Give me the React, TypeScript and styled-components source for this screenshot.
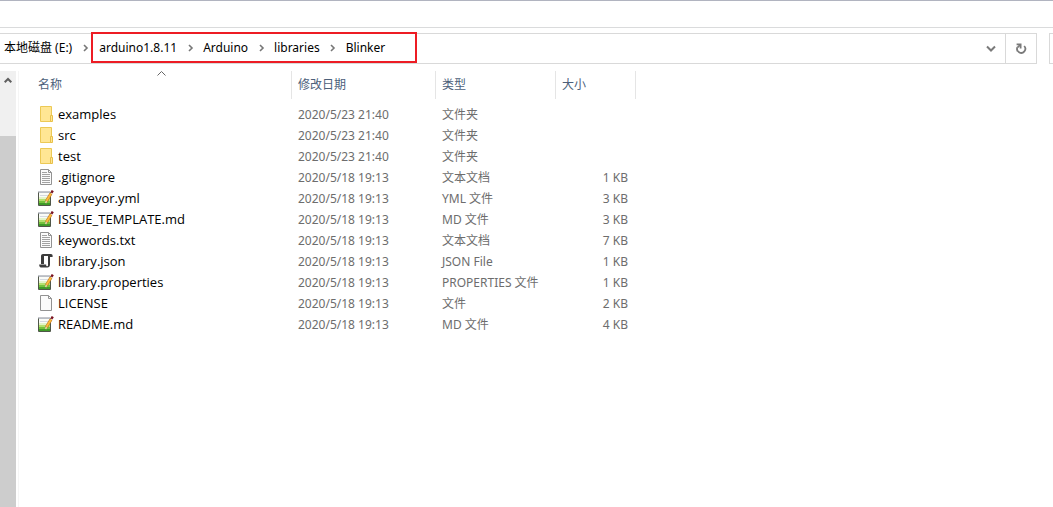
import React from "react";
import styled, { createGlobalStyle } from "styled-components";

const GlobalStyle = createGlobalStyle`
  * { box-sizing: border-box; }
  body {
    margin: 0;
    background: #fff;
    font-family: "Noto Sans", "Noto Sans CJK SC", sans-serif;
    font-size: 12px;
    line-height: 20px;
    color: #000;
  }
  button, input, a { font: inherit; color: inherit; }
`;

const Window = styled.div`
  display: flex;
  flex-direction: column;
  min-height: 100vh;
  overflow: hidden;
`;

const Ribbon = styled.div`
  height: 28px;
  border-top: 1px solid #b1b4c0;
  border-bottom: 1px solid #dadbdc;
`;

const NavRow = styled.div`
  display: flex;
  gap: 12px;
  padding-top: 5px;
`;

const AddressBar = styled.nav`
  display: flex;
  flex: 1;
  height: 31px;
  border: 1px solid #d9d9d9;
  border-left: 0;
`;

const Crumbs = styled.div`
  display: flex;
  align-items: center;
  flex: 1;
  padding: 0 0 2px 4px;
`;

const Crumb = styled.a`
  text-decoration: none;
  white-space: nowrap;
`;

const IconButton = styled.button<{ $width: number; $divided?: boolean }>`
  display: flex;
  align-items: center;
  justify-content: center;
  width: ${(p) => p.$width}px;
  padding: 0;
  border: 0;
  border-left: ${(p) => (p.$divided ? "1px solid #d9d9d9" : "0")};
  background: none;
`;

const Highlighted = styled.div`
  position: relative;
  display: flex;
  align-items: center;

  &::after {
    content: "";
    position: absolute;
    inset: -6px -32px -5px -8px;
    border: 2px solid #ed1c24;
    pointer-events: none;
  }
`;

const SearchBox = styled.input`
  width: 4px;
  height: 31px;
  padding: 0;
  border: 1px solid #d9d9d9;
  border-right: 0;
`;

const Content = styled.div`
  display: flex;
  flex: 1;
  margin-top: 7px;
`;

const Scrollbar = styled.div`
  display: flex;
  flex-direction: column;
  width: 16px;
  background: #f0f0f0;
`;

const ScrollUp = styled.button`
  display: flex;
  justify-content: center;
  height: 65px;
  padding: 6px 0 0;
  border: 0;
  background: none;
`;

const ScrollThumb = styled.div`
  flex: 1;
  background: #cdcdcd;
`;

const FilePane = styled.main`
  flex: 1;
  margin-left: 2px;
  padding-left: 13px;
  border-left: 1px solid #f5f5f5;
`;

const FileTable = styled.table`
  width: 604px;
  table-layout: fixed;
  border-collapse: collapse;
`;

const HeadCell = styled.th<{ $width: number }>`
  width: ${(p) => p.$width}px;
  padding: 0 0 5px;
  font-weight: 400;
`;

const HeadButton = styled.button`
  position: relative;
  display: block;
  width: 100%;
  height: 28px;
  padding: 0 6px;
  border: 0;
  border-right: 1px solid #e5e5e5;
  background: none;
  color: #4c607a;
  text-align: left;
`;

const SortMark = styled.svg`
  position: absolute;
  top: 0;
  left: 50%;
  margin-left: -5px;
`;

const Cell = styled.td<{ $right?: boolean }>`
  height: 21px;
  padding: 0 8px 0 6px;
  color: #6d6d6d;
  text-align: ${(p) => (p.$right ? "right" : "left")};
  white-space: nowrap;
`;

const NameCell = styled(Cell)`
  vertical-align: top;
`;

const FileName = styled.div`
  display: flex;
  align-items: center;
  gap: 4px;
  color: #000;
  font-family: "Open Sans", "Noto Sans CJK SC", sans-serif;
  font-size: 13px;
`;

const Chevron = () => (
  <svg width="7" height="8" viewBox="0 0 7 8" fill="none" stroke="#777" strokeWidth="1.6">
    <path d="M2 1l3 3-3 3" />
  </svg>
);

const DownIcon = () => (
  <svg width="10" height="8" viewBox="0 0 10 8" fill="none" stroke="#7a7a7a" strokeWidth="2">
    <path d="M1 1.5l4 4 4-4" />
  </svg>
);

const RefreshIcon = () => (
  <svg width="12" height="12" viewBox="0 0 12 12" fill="none" stroke="#7a7a7a" strokeWidth="1.8">
    <path d="M9.2 3A4.1 4.1 0 1 1 2.4 4.2" />
    <path d="M1.6 1.4h4v4" />
    <path d="M5.4 1.6L2.6 4.3" />
  </svg>
);

const UpIcon = () => (
  <svg width="8" height="7" viewBox="0 0 8 7" fill="none" stroke="#5f5f5f" strokeWidth="2">
    <path d="M.7 5.3L4 2l3.3 3.3" />
  </svg>
);

type Kind = "folder" | "text" | "note" | "script" | "blank";

const Page = () => (
  <path d="M2.5.5h8l3 3v12h-11z" fill="#fbfbfb" stroke="#929292" />
);

const FileIcon = ({ kind }: { kind: Kind }) => (
  <svg width="16" height="16" viewBox="0 0 16 16" aria-hidden="true">
    {kind === "folder" && (
      <>
        <path d="M2.5.5h11v15h-11z" fill="#ffe694" stroke="#ecc955" />
        <path d="M12.5 9.5h2v6h-2z" fill="#ffe694" stroke="#e8c04a" />
      </>
    )}
    {kind === "text" && (
      <>
        <Page />
        <path d="M10.5.5v3h3" fill="none" stroke="#929292" />
        <path d="M4 3.5h5M4 5.5h8M4 7.5h8M4 9.5h8M4 11.5h8M4 13.5h8" stroke="#a2a2a2" />
      </>
    )}
    {kind === "blank" && (
      <>
        <Page />
        <path d="M10.5.5v3h3" fill="none" stroke="#929292" />
      </>
    )}
    {kind === "script" && (
      <>
        <path d="M5 1h8c1 0 1.6.8 1.6 1.8V4H12V3H6v8H3V3.2C3 1.8 3.8 1 5 1z" fill="#3c3c3c" />
        <path d="M10 3h2v8.6c0 1.8-1 3-2.6 3H3.8C2.2 14.6 1.2 13.6 1.2 12v-.4h7v.8c0 .5.3.8.8.8s1-.3 1-1z" fill="#3c3c3c" />
      </>
    )}
    {kind === "note" && (
      <>
        <path d="M.5 2.5h12v13H.5z" fill="#fafbf7" />
        <path d="M1 7h11v2H1z" fill="#e3f4c8" />
        <path d="M1 9h11v2H1z" fill="#b4e070" />
        <path d="M1 11h11v2H1z" fill="#74c23c" />
        <path d="M1 13h11v2H1z" fill="#3f9a28" />
        <path d="M2 5.5h8" stroke="#d5dade" />
        <path d="M.5 2v13.5h12V2" fill="none" stroke="#4f5648" />
        <path d="M.5 1.5h12" stroke="#8a8f98" strokeDasharray="1 1" />
        <path d="M.5 2.5h12" stroke="#b9bdc4" />
        <path d="M13 3.4L8.4 11.2" stroke="#b36a1c" strokeWidth="3" />
        <path d="M13 3.4L8.6 10.8" stroke="#fdbb3c" strokeWidth="2" />
        <path d="M8.7 10.8L7.5 13" stroke="#e7c9a0" strokeWidth="1.6" />
        <path d="M13.4 2.8L14.8.6" stroke="#7b1320" strokeWidth="2.4" />
      </>
    )}
  </svg>
);

const files: { name: string; kind: Kind; date: string; type: string; size: string }[] = [
  { name: "examples", kind: "folder", date: "2020/5/23 21:40", type: "文件夹", size: "" },
  { name: "src", kind: "folder", date: "2020/5/23 21:40", type: "文件夹", size: "" },
  { name: "test", kind: "folder", date: "2020/5/23 21:40", type: "文件夹", size: "" },
  { name: ".gitignore", kind: "text", date: "2020/5/18 19:13", type: "文本文档", size: "1 KB" },
  { name: "appveyor.yml", kind: "note", date: "2020/5/18 19:13", type: "YML 文件", size: "3 KB" },
  { name: "ISSUE_TEMPLATE.md", kind: "note", date: "2020/5/18 19:13", type: "MD 文件", size: "3 KB" },
  { name: "keywords.txt", kind: "text", date: "2020/5/18 19:13", type: "文本文档", size: "7 KB" },
  { name: "library.json", kind: "script", date: "2020/5/18 19:13", type: "JSON File", size: "1 KB" },
  { name: "library.properties", kind: "note", date: "2020/5/18 19:13", type: "PROPERTIES 文件", size: "1 KB" },
  { name: "LICENSE", kind: "blank", date: "2020/5/18 19:13", type: "文件", size: "2 KB" },
  { name: "README.md", kind: "note", date: "2020/5/18 19:13", type: "MD 文件", size: "4 KB" },
];

const folders = ["arduino1.8.11", "Arduino", "libraries", "Blinker"];

const columns = [
  { label: "名称", width: 260, sorted: true },
  { label: "修改日期", width: 144 },
  { label: "类型", width: 120 },
  { label: "大小", width: 80 },
];

export default function App() {
  return (
    <Window>
      <GlobalStyle />
      <Ribbon />
      <NavRow>
        <AddressBar>
          <Crumbs>
            <Crumb href="#">本地磁盘 (E:)</Crumb>
            <IconButton $width={27} aria-label="展开"><Chevron /></IconButton>
            <Highlighted>
              {folders.map((name, i) => (
                <React.Fragment key={name}>
                  {i > 0 && <IconButton $width={26} aria-label="展开"><Chevron /></IconButton>}
                  <Crumb href="#">{name}</Crumb>
                </React.Fragment>
              ))}
            </Highlighted>
          </Crumbs>
          <IconButton $width={29} aria-label="历史记录"><DownIcon /></IconButton>
          <IconButton $width={31} $divided aria-label="刷新"><RefreshIcon /></IconButton>
        </AddressBar>
        <SearchBox aria-label="搜索" />
      </NavRow>
      <Content>
        <Scrollbar>
          <ScrollUp aria-label="向上滚动"><UpIcon /></ScrollUp>
          <ScrollThumb />
        </Scrollbar>
        <FilePane>
          <FileTable>
            <thead>
              <tr>
                {columns.map((c) => (
                  <HeadCell key={c.label} $width={c.width} scope="col">
                    <HeadButton>
                      {c.label}
                      {c.sorted && (
                        <SortMark width="9" height="6" viewBox="0 0 9 6" fill="none" stroke="#666">
                          <path d="M.5 4.5l4-4 4 4" />
                        </SortMark>
                      )}
                    </HeadButton>
                  </HeadCell>
                ))}
              </tr>
            </thead>
            <tbody>
              {files.map((f) => (
                <tr key={f.name}>
                  <NameCell>
                    <FileName><FileIcon kind={f.kind} />{f.name}</FileName>
                  </NameCell>
                  <Cell>{f.date}</Cell>
                  <Cell>{f.type}</Cell>
                  <Cell $right>{f.size}</Cell>
                </tr>
              ))}
            </tbody>
          </FileTable>
        </FilePane>
      </Content>
    </Window>
  );
}
